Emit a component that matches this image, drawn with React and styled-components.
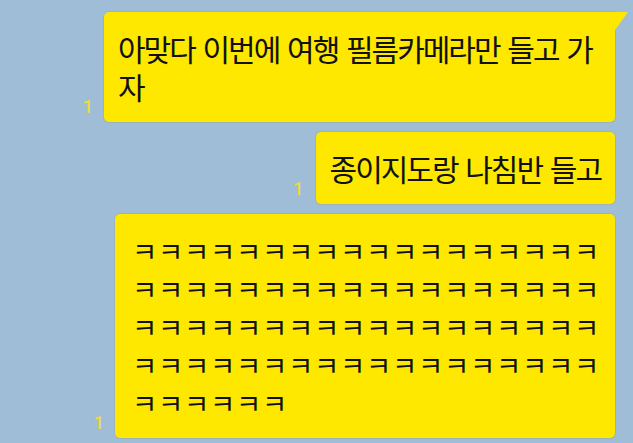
import React from "react";
import styled, { createGlobalStyle } from "styled-components";

const GlobalStyle = createGlobalStyle`
  html, body {
    margin: 0;
    padding: 0;
    background: #9fbdd6;
  }
  #root {
    min-height: 100vh;
  }
`;

const ChatRoom = styled.div`
  width: 633px;
  height: 443px;
  overflow: hidden;
  box-sizing: border-box;
  padding: 12px 18px 0 0;
  display: flex;
  flex-direction: column;
  gap: 10px;
  font-family: "Noto Sans CJK KR", "Noto Sans", sans-serif;
`;

const MessageRow = styled.div`
  display: flex;
  justify-content: flex-end;
  align-items: flex-end;
  gap: ${(p) => p.$gap || 11}px;
`;

const UnreadCount = styled.span`
  font-family: "Roboto", "Noto Sans", sans-serif;
  font-size: 18px;
  font-weight: 500;
  line-height: 1;
  color: #eadc3c;
  margin-bottom: 6px;
`;

const Bubble = styled.div`
  position: relative;
  box-sizing: border-box;
  max-width: ${(p) => p.$maxWidth}px;
  padding: ${(p) => p.$padding || "17px 14px"};
  background: #fee800;
  border-radius: ${(p) => (p.$tail ? "5px 0 5px 5px" : "5px")};
  box-shadow: 0 0 0 1px rgba(150, 140, 40, 0.18);
  color: #111;
  font-size: ${(p) => p.$fontSize}px;
  line-height: 38px;
  letter-spacing: ${(p) => p.$spacing}px;
  word-spacing: ${(p) => p.$wordSpacing || 0}px;
  word-break: break-all;

  &::after {
    content: "";
    display: ${(p) => (p.$tail ? "block" : "none")};
    position: absolute;
    top: 0;
    right: -13px;
    width: 0;
    height: 0;
    border-top: 18px solid #fee800;
    border-right: 13px solid transparent;
  }
`;

const messages = [
  {
    text: "아맞다 이번에 여행 필름카메라만 들고 가자",
    maxWidth: 511,
    fontSize: 30,
    spacing: -2,
    wordSpacing: 3,
    tail: true,
    gap: 11,
  },
  {
    text: "종이지도랑 나침반 들고",
    maxWidth: 511,
    fontSize: 30,
    spacing: -2,
    wordSpacing: 3,
    gap: 12,
  },
  {
    text: "ㅋ".repeat(78),
    maxWidth: 500,
    fontSize: 27.5,
    spacing: 0.7,
    padding: "17px 11px 17px 17px",
    gap: 11,
  },
];

export default function App() {
  return (
    <>
      <GlobalStyle />
      <ChatRoom>
        {messages.map((m, i) => (
          <MessageRow key={i} $gap={m.gap}>
            <UnreadCount>1</UnreadCount>
            <Bubble
              $maxWidth={m.maxWidth}
              $fontSize={m.fontSize}
              $spacing={m.spacing}
              $wordSpacing={m.wordSpacing}
              $padding={m.padding}
              $tail={m.tail}
            >
              {m.text}
            </Bubble>
          </MessageRow>
        ))}
      </ChatRoom>
    </>
  );
}
